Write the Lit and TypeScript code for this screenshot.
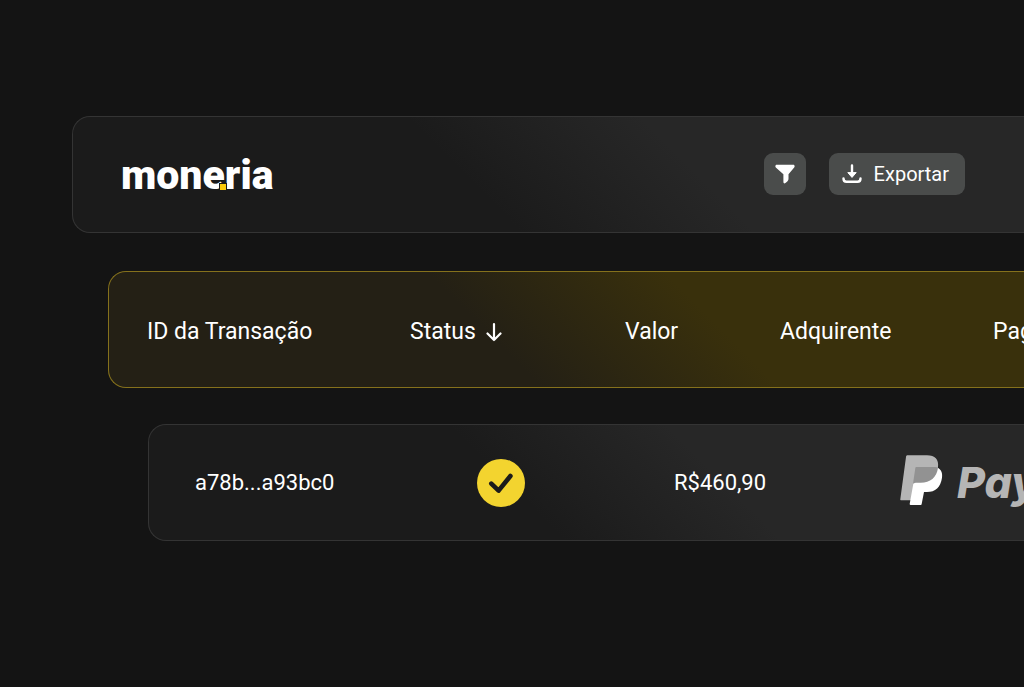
import { LitElement, html, css, svg } from "lit";
import { customElement, property, state } from "lit/decorators.js";

const filterIcon = svg`<svg class="icon" width="20" height="20" viewBox="0 0 20 20" aria-hidden="true">
  <path fill="currentColor" d="M1.800 .8h16.400c1.400 0 1.900 1.600 1 2.600l-5.700 6.800v4.400c0 1.200-.5 2.300-1.500 3.200l-1.600 1.300c-.9.7-2 .2-2-1v-7.900L.8 3.400C-.1 2.400.4.8 1.800.8z" />
</svg>`;

const downloadIcon = svg`<svg class="icon" width="20" height="20" viewBox="0 0 20 20" aria-hidden="true">
  <path fill="none" stroke="currentColor" stroke-width="2.400" stroke-linecap="round" d="M10 1.400v8M1.500 14.500c0 2.600 1 3.300 3 3.300h11c2 0 3-.7 3-3.300" />
  <path fill="currentColor" stroke="currentColor" stroke-linejoin="round" d="M5.800 8.600h8.400L10 13.400z" />
</svg>`;

const arrowDown = svg`<svg class="icon" width="16" height="20" viewBox="0 0 16 20" aria-hidden="true">
  <path fill="none" stroke="currentColor" stroke-width="2.200" stroke-linecap="round" stroke-linejoin="round" d="M8 2v16M1.500 11.500L8 18l6.500-6.500" />
</svg>`;

const checkIcon = svg`<svg class="icon" width="48" height="48" viewBox="0 0 48 48" role="img" aria-label="Aprovado">
  <circle cx="24" cy="24" r="24" fill="#f3d42f" />
  <path fill="none" stroke="#1b1b1b" stroke-width="4.600" stroke-linecap="round" stroke-linejoin="round" d="M14.300 24.600l7.300 7L33.400 17" />
</svg>`;

const paypalMark = svg`<svg class="icon" width="43" height="50" viewBox="0 0 129 150" aria-hidden="true">
  <path fill="#b5b5b5" d="M23 1h58c24 0 36 13 33 35-4 28-22 47-52 47H43l-9 53H4c-2 0-4-1-3-4L18 6c0-3 2-5 5-5z" />
  <path fill="#fff" d="M113 38c11 6 15 16 13 30-4 28-20 43-45 43h-9l-7 36c0 2-1 3-3 3H32c-2 0-3-1-3-3l11-61z" />
  <path fill="#929292" d="M49 36h56c4 0 7 1 9 2-4 29-23 45-52 45H45c-3 0-5 1-6 3l7-47c0-2 1-3 3-3z" />
</svg>`;

@customElement("brand-logo")
class BrandLogo extends LitElement {
  static styles = css`
    :host {
      display: block;
    }
    .logo {
      position: relative;
      display: block;
      color: #fff;
      font: 900 41px/48px Roboto, "Liberation Sans", sans-serif;
      text-decoration: none;
    }
    .dot {
      position: absolute;
      left: 99px;
      bottom: 9px;
      width: 6px;
      height: 6px;
      background: #fccb0a;
      box-shadow: 0 0 0 1px #1b1b1b;
    }
  `;
  render() {
    return html`<a class="logo" href="#">moneria<span class="dot"></span></a>`;
  }
}

@customElement("action-button")
class ActionButton extends LitElement {
  @property() label = "";
  @property() name = "";
  static styles = css`
    :host {
      display: block;
    }
    .btn {
      display: flex;
      align-items: center;
      gap: 12px;
      height: 42px;
      padding: 0 11px;
      border: 0;
      border-radius: 9px;
      background: #4a4c4b;
      color: #fff;
      font: 400 20px/24px Roboto, "Liberation Sans", sans-serif;
      cursor: pointer;
    }
    .labelled {
      padding: 0 16px 0 13px;
    }
    .icon {
      display: block;
    }
  `;
  render() {
    return this.label
      ? html`<button class="btn labelled" type="button">${downloadIcon}<span>${this.label}</span></button>`
      : html`<button class="btn" type="button" aria-label=${this.name}>${filterIcon}</button>`;
  }
}

@customElement("app-root")
class AppRoot extends LitElement {
  @state() private descending = true;

  private columns = ["ID da Transação", "Status", "Valor", "Adquirente", "Pagamento"];

  static styles = css`
    :host {
      display: block;
      box-sizing: border-box;
      min-height: 100vh;
      padding-top: 116px;
      overflow: hidden;
      background: #141414;
      color: #fff;
      font-family: Roboto, "Liberation Sans", sans-serif;
    }
    .page,
    .table,
    .group {
      display: flex;
      flex-direction: column;
    }
    .page {
      gap: 38px;
    }
    .table {
      gap: 36px;
    }
    .panel {
      box-sizing: border-box;
      height: 117px;
      align-items: center;
      border: 1px solid #343434;
      border-right: 0;
      border-radius: 18px 0 0 18px;
      background: linear-gradient(45deg, #1b1b1b 42%, #272727 64%);
    }
    .toolbar {
      display: flex;
      justify-content: space-between;
      margin-left: 72px;
      padding: 0 59px 0 48px;
    }
    .actions {
      display: flex;
      gap: 23px;
      padding-bottom: 2px;
    }
    .heading {
      display: grid;
      grid-template-columns: minmax(0, 263fr) minmax(0, 215fr) minmax(0, 155fr) minmax(0, 213fr) minmax(0, 31fr);
      margin-left: 108px;
      padding: 4px 0 0 38px;
      border-color: #85711c;
      background: linear-gradient(45deg, #242015 42%, #39300c 65%);
      font-size: 23px;
      line-height: 28px;
    }
    .entry {
      display: grid;
      grid-template-columns: minmax(0, 282fr) minmax(0, 197fr) minmax(0, 226fr) minmax(0, 124fr);
      margin-left: 148px;
      padding-left: 46px;
      font-size: 22px;
      line-height: 28px;
    }
    .cell {
      padding: 0;
      font-weight: 400;
      text-align: left;
      white-space: nowrap;
    }
    .sort {
      display: flex;
      align-items: center;
      gap: 10px;
      padding: 0;
      border: 0;
      background: none;
      color: inherit;
      font: inherit;
      cursor: pointer;
    }
    .icon {
      display: block;
      flex: none;
    }
    .up .icon {
      transform: rotate(180deg);
    }
    .paypal {
      display: flex;
      align-items: center;
      gap: 14px;
      padding-bottom: 6px;
      color: #b5b5b5;
      font: italic 800 43px/50px Inter, "Open Sans", sans-serif;
    }
    .wordmark {
      padding-top: 4px;
    }
  `;

  private toggle() {
    this.descending = !this.descending;
  }

  render() {
    return html`
      <main class="page">
        <header class="panel toolbar">
          <brand-logo></brand-logo>
          <div class="actions">
            <action-button name="Filtrar"></action-button>
            <action-button label="Exportar"></action-button>
          </div>
        </header>
        <table class="table">
          <thead class="group">
            <tr class="panel heading">
              ${this.columns.map((name) =>
                name === "Status"
                  ? html`<th class="cell" scope="col">
                      <button class="sort ${this.descending ? "" : "up"}" type="button" @click=${this.toggle}>
                        ${name}${arrowDown}
                      </button>
                    </th>`
                  : html`<th class="cell" scope="col">${name}</th>`
              )}
            </tr>
          </thead>
          <tbody class="group">
            <tr class="panel entry">
              <td class="cell">a78b...a93bc0</td>
              <td class="cell">${checkIcon}</td>
              <td class="cell">R$460,90</td>
              <td class="cell"><span class="paypal">${paypalMark}<span class="wordmark">PayPal</span></span></td>
            </tr>
          </tbody>
        </table>
      </main>
    `;
  }
}
